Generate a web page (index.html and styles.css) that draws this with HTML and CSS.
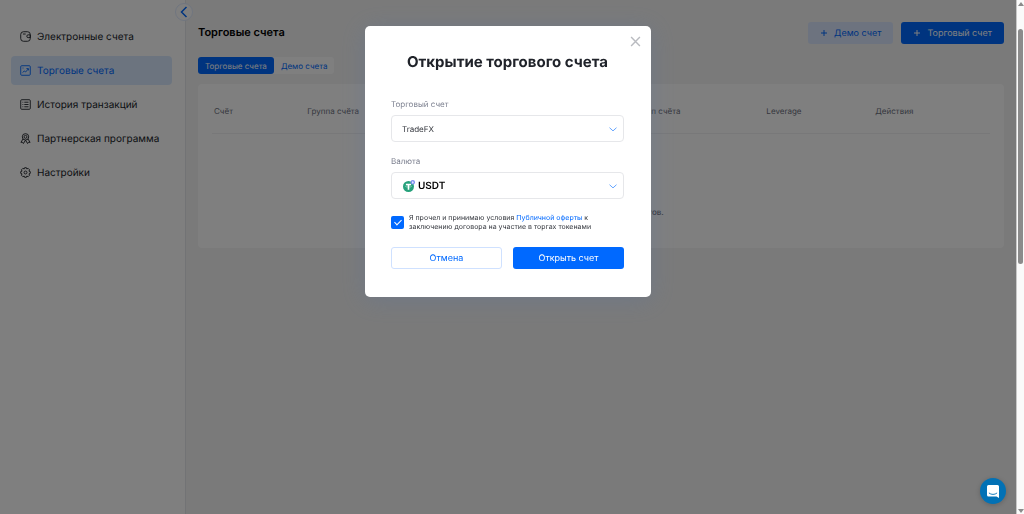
FILE: index.html
```
<!DOCTYPE html>
<html lang="ru">
  <head>
    <title>Торговые счета</title>
    <meta charset="utf-8" />
    <meta name="viewport" content="width=device-width, initial-scale=1" />
    <link rel="stylesheet" href="styles.css">
  </head>
  <body>
    <div class="app">
      <aside class="sidebar">
        <button class="collapse" type="button" aria-label="Свернуть меню">
          <svg width="8" height="12" viewBox="0 0 8 12"><path d="M6.5 1 1.5 6l5 5"/></svg>
        </button>
        <nav class="menu">
          <a href="#" class="menu-item">
            <svg class="icon" viewBox="0 0 12 12"><rect x=".8" y=".8" width="10.4" height="10.4" rx="3"/><path d="M3.2 3.3h3M11.200 4.200H8.900a1.500 1.500 0 0 0 0 3h2.300z"/></svg>
            Электронные счета
          </a>
          <a href="#" class="menu-item active">
            <svg class="icon" viewBox="0 0 12 12"><rect x=".8" y=".8" width="10.4" height="10.4" rx="1"/><path d="M2.8 8.2 4.6 6.6l1.6 1L9 4.3M7 3.9h2.2v2M2.8 3.3h1"/></svg>
            Торговые счета
          </a>
          <a href="#" class="menu-item">
            <svg class="icon" viewBox="0 0 12 12"><rect x=".8" y=".8" width="10.4" height="10.4" rx="1"/><path d="M2.7 3.5h.9M2.7 6h.9M2.7 8.5h.9M4.7 3.5h4.6M4.7 6h4.6M4.7 8.5h4.6"/></svg>
            История транзакций
          </a>
          <a href="#" class="menu-item">
            <svg class="icon" viewBox="0 0 12 12"><circle cx="6" cy="4.2" r="3.5"/><circle cx="6" cy="4.2" r="1.6"/><path d="M3.3 6.5 1 10.2l1.8-.1.9 1.4L6 7.8l2.3 3.7.9-1.4 1.8.1-2.3-3.7"/></svg>
            Партнерская программа
          </a>
          <a href="#" class="menu-item">
            <svg class="icon" viewBox="0 0 12 12"><path d="M5 .8h2l.4 1.300 1.500-.6L10.400 3l-.6 1.500 1.400.5v2l-1.400.5.6 1.500-1.500 1.500-1.500-.6L7 11.200H5l-.4-1.300-1.500.6L1.600 9l.6-1.500L.8 7V5l1.400-.5L1.600 3l1.500-1.500 1.500.6z"/><circle cx="6" cy="6" r="1.600"/></svg>
            Настройки
          </a>
        </nav>
      </aside>

      <main class="main">
        <header class="head">
          <h1>Торговые счета</h1>
          <button class="btn light" type="button">
            <svg class="plus" viewBox="0 0 8 8"><path d="M4 1v6M1 4h6"/></svg>Демо счет
          </button>
          <button class="btn primary" type="button">
            <svg class="plus" viewBox="0 0 8 8"><path d="M4 1v6M1 4h6"/></svg>Торговый счет
          </button>
        </header>

        <div class="tabs">
          <button class="tab active" type="button">Торговые счета</button>
          <button class="tab" type="button">Демо счета</button>
        </div>

        <section class="card">
          <table class="accounts">
            <colgroup>
              <col class="c-id"><col class="c-group"><col class="c-balance"><col class="c-type"><col class="c-lev"><col class="c-act">
            </colgroup>
            <thead>
              <tr>
                <th>Счёт</th>
                <th>Группа счёта</th>
                <th>Баланс</th>
                <th>Тип счёта</th>
                <th>Leverage</th>
                <th>Действия</th>
              </tr>
            </thead>
          </table>
          <p class="empty">У вас ещё нет торговых счетов.</p>
        </section>
      </main>
    </div>

    <div class="overlay">
      <form class="modal" role="dialog" aria-labelledby="modal-title">
        <button class="close" type="button" aria-label="Закрыть">
          <svg width="11" height="11" viewBox="0 0 10 10"><path d="m1 1 8 8M9 1 1 9"/></svg>
        </button>
        <h2 id="modal-title">Открытие торгового счета</h2>

        <label class="caption" for="account">Торговый счет</label>
        <div class="select">
          <select id="account"><option>TradeFX</option></select>
          <svg class="arrow" viewBox="0 0 8 5"><path d="M.5.7 4 3.900 7.500.7"/></svg>
        </div>

        <label class="caption" for="currency">Валюта</label>
        <div class="select coin">
          <svg class="usdt" viewBox="0 0 12 12">
            <circle cx="5.500" cy="6.500" r="5.500" fill="#26a17b"/>
            <path d="M2.900 3.700h5.200v1.400H6.300v4.700H4.700V5.100H2.900z" fill="#fff"/>
            <ellipse cx="5.500" cy="6.300" rx="3" ry=".8" fill="none" stroke="#fff" stroke-width=".4"/>
            <circle cx="9.800" cy="2.300" r="2.200" fill="#7b8df0"/>
            <path d="m9.800.7 1 1.700-1 1.500-1-1.500z" fill="#dfe4ff"/>
          </svg>
          <select id="currency"><option>USDT</option></select>
          <svg class="arrow" viewBox="0 0 8 5"><path d="M.5.7 4 3.900 7.500.7"/></svg>
        </div>

        <div class="agree">
          <input type="checkbox" id="agree" checked>
          <label for="agree">Я прочел и принимаю условия <a href="#">Публичной оферты</a> к заключению договора на участие в торгах токенами</label>
        </div>

        <div class="actions">
          <button class="btn outline" type="button">Отмена</button>
          <button class="btn primary" type="submit">Открыть счет</button>
        </div>
      </form>
    </div>

    <button class="chat" type="button" aria-label="Чат">
      <svg width="12" height="13" viewBox="0 0 12 13"><path d="M1.500 0h9A1.500 1.500 0 0 1 12 1.500V13l-2.500-1.500h-8A1.500 1.500 0 0 1 0 10V1.500A1.500 1.500 0 0 1 1.500 0z" fill="#fff"/><path d="M2.200 8.200c2 1.700 5.600 1.700 7.600 0" fill="none" stroke="#0271b5" stroke-width=".9" stroke-linecap="round"/></svg>
    </button>

    <div class="scroll" aria-hidden="true">
      <svg width="6" height="4" viewBox="0 0 6 4"><path d="M3 0l3 4H0z"/></svg>
      <div class="track"><div class="thumb"></div></div>
      <svg width="6" height="4" viewBox="0 0 6 4"><path d="M3 4l3-4H0z"/></svg>
    </div>
  </body>
</html>
```
FILE: styles.css
```
* {
    box-sizing: border-box; }

body {
    margin: 0;
    font-family: Inter, "Liberation Sans", sans-serif;
    font-size: 8px;
    text-rendering: geometricPrecision;
    color: #20232a; }

button, select, input {
    font-family: inherit;
    text-rendering: inherit;
    margin: 0; }

button {
    cursor: pointer; }

svg {
    flex: none; }

a {
    color: #0069ff;
    text-decoration: none; }

.app {
    display: flex;
    min-height: 100vh;
    padding-right: 8px;
    background: #f4f4f4; }

/* sidebar */
.sidebar {
    position: relative;
    width: 186px;
    flex: none;
    padding: 22px 13px 0 11px;
    background: #fff;
    border-right: 1px solid #e4e6ea; }

.collapse {
    position: absolute;
    top: 3px;
    right: -8px;
    width: 18px;
    height: 18px;
    display: flex;
    align-items: center;
    justify-content: center;
    padding: 0;
    background: #fff;
    border: 1px solid #e0ebff;
    border-radius: 50%; }
.collapse path {
    fill: none;
    stroke: #0069ff;
    stroke-width: 1.5; }

.menu {
    display: flex;
    flex-direction: column;
    gap: 5px; }

.menu-item {
    display: flex;
    align-items: center;
    gap: 6px;
    height: 29px;
    padding-left: 9px;
    border-radius: 4px;
    font-size: 10px;
    color: #20232a; }
.menu-item.active {
    background: #d9e9ff;
    color: #0069ff; }

.icon {
    width: 11px;
    height: 11px;
    fill: none;
    stroke: currentColor;
    stroke-width: 1; }

/* content */
.main {
    flex: 1;
    padding: 22px 12px 0 12px; }

.head {
    display: flex;
    gap: 8px; }
.head h1 {
    flex: 1;
    margin: 0;
    font-size: 11px;
    line-height: 21px;
    font-weight: 600;
    color: #000; }

.btn {
    display: flex;
    align-items: center;
    justify-content: center;
    gap: 6px;
    height: 22px;
    padding: 0 11px;
    border: 1px solid transparent;
    border-radius: 3px;
    font-size: 9px; }
.btn.primary {
    background: #0069ff;
    color: #fff; }
.btn.light {
    background: #dbe7ff;
    color: #0069ff; }
.btn.outline {
    background: #fff;
    border-color: #cfe1ff;
    color: #0069ff; }

.plus {
    width: 8px;
    height: 8px;
    fill: none;
    stroke: currentColor;
    stroke-width: 1; }

.tabs {
    display: inline-flex;
    margin-top: 13px;
    background: #fff;
    border-radius: 3px; }
.tab {
    height: 17px;
    padding: 0 7px;
    border: 0;
    border-radius: 3px;
    background: none;
    font-size: 8px;
    color: #0069ff; }
.tab.active {
    background: #0069ff;
    color: #fff; }

.card {
    min-height: 164px;
    margin-top: 10px;
    padding: 5px 14px 0;
    background: #fff;
    border-radius: 4px; }

.accounts {
    width: 100%;
    table-layout: fixed;
    border-collapse: collapse; }
.accounts th {
    height: 44px;
    padding: 0 2px;
    border-bottom: 1px solid #f0f0f2;
    font-size: 8px;
    font-weight: 400;
    text-align: left;
    color: #6d7080; }
.c-id { width: 12%; }
.c-group { width: 22%; }
.c-balance { width: 21%; }
.c-type { width: 16%; }
.c-lev { width: 14%; }

.empty {
    margin: 73px 0 0;
    text-align: center;
    font-weight: 500;
    color: #6d7080; }

/* modal */
.overlay {
    position: fixed;
    inset: 0 8px 0 0;
    display: flex;
    justify-content: center;
    align-items: flex-start;
    padding-top: 26px;
    background: rgba(0, 0, 0, .5); }

.modal {
    position: relative;
    width: 286px;
    padding: 26px 27px 28px 26px;
    background: #fff;
    border-radius: 5px;
    box-shadow: 0 3px 24px rgba(90, 120, 170, .3); }
.modal h2 {
    margin: 0 0 26px;
    font-size: 15px;
    line-height: 20px;
    font-weight: 700;
    text-align: center; }

.close {
    position: absolute;
    top: 10px;
    right: 10px;
    display: flex;
    padding: 0;
    border: 0;
    background: none; }
.close path {
    fill: none;
    stroke: #b9bbc0;
    stroke-width: 1.3; }

.caption {
    display: block;
    margin-bottom: 5px;
    font-size: 8px;
    line-height: 12px;
    color: #7d8190; }

.select {
    position: relative;
    margin-bottom: 13px; }
.select select {
    display: block;
    width: 100%;
    height: 27px;
    padding: 0 24px 0 10px;
    appearance: none;
    background: #fff;
    border: 1px solid #e6e7ea;
    border-radius: 4px;
    font-size: 8px;
    color: #33363d; }
.select.coin select {
    padding-left: 26px;
    font-size: 10px;
    font-weight: 600;
    color: #000; }
.usdt {
    position: absolute;
    left: 12px;
    top: 8px;
    width: 12px;
    height: 12px; }
.arrow {
    position: absolute;
    right: 7px;
    top: 12px;
    width: 8px;
    height: 5px;
    fill: none;
    stroke: #66a5ff;
    stroke-width: 1;
    pointer-events: none; }

.agree {
    display: flex;
    align-items: center;
    gap: 5px;
    margin-top: 14px;
    font-size: 7px;
    line-height: 9px;
    color: #33363d; }
.agree input {
    flex: none;
    display: flex;
    justify-content: center;
    width: 13px;
    height: 13px;
    appearance: none;
    background: #0069ff;
    border-radius: 2px; }
.agree input:checked::before {
    content: "";
    width: 3px;
    height: 6px;
    margin-top: 2px;
    border: solid #fff;
    border-width: 0 1px 1px 0;
    transform: rotate(45deg); }

.actions {
    display: grid;
    grid-template-columns: 1fr 1fr;
    gap: 11px;
    margin-top: 16px; }

.chat {
    position: fixed;
    right: 18px;
    bottom: 10px;
    width: 26px;
    height: 26px;
    display: flex;
    align-items: center;
    justify-content: center;
    padding: 0;
    border: 0;
    border-radius: 50%;
    background: #0271b5;
    box-shadow: 0 1px 5px rgba(0, 0, 0, .2); }

/* scrollbar */
.scroll {
    position: fixed;
    inset: 0 0 0 auto;
    width: 8px;
    display: flex;
    flex-direction: column;
    align-items: center;
    padding: 2px 0 1px;
    background: #fafafa;
    border-left: 1px solid #c8c8c8; }
.scroll path {
    fill: #8b8b8b; }
.track {
    flex: 1;
    padding-top: 23px; }
.thumb {
    width: 5px;
    height: 49%;
    background: #8b8b8b;
    border-radius: 3px; }
```
